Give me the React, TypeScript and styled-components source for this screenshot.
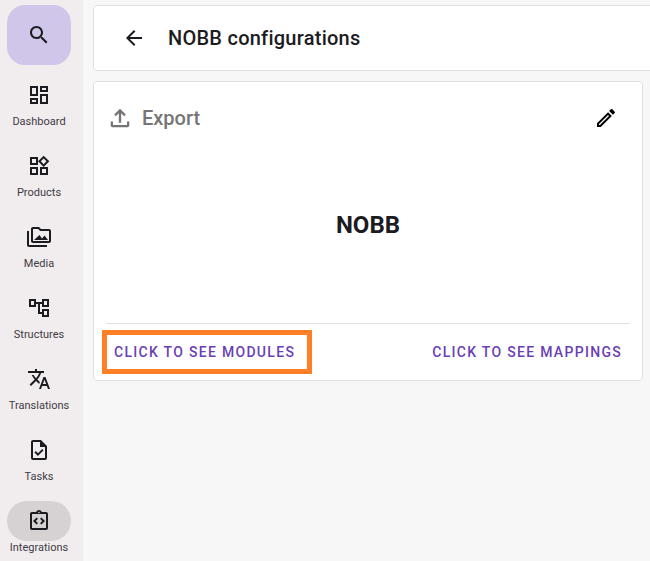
import { ReactNode } from "react";
import styled, { createGlobalStyle } from "styled-components";

const GlobalStyle = createGlobalStyle`
  html, body {
    margin: 0;
    padding: 0;
    height: 100%;
    overflow: hidden;
    background: #f7f7f7;
    font-family: Roboto, "Liberation Sans", sans-serif;
  }
`;

const Page = styled.div`
  display: flex;
  width: 650px;
  height: 561px;
  overflow: hidden;
`;

const Sidebar = styled.nav`
  flex: 0 0 83px;
  min-width: 0;
  box-sizing: border-box;
  padding: 5px 12px 0 7px;
  background: #f1edee;
  display: flex;
  flex-direction: column;
  align-items: center;
`;

const SearchButton = styled.button`
  flex: 0 0 60px;
  width: 64px;
  margin-bottom: 10px;
  border: none;
  border-radius: 18px;
  background: #d0c6e9;
  color: #1c1b1f;
  display: flex;
  align-items: center;
  justify-content: center;
  padding: 0;
`;

const NavItem = styled.a`
  flex: 0 0 71px;
  width: 64px;
  display: flex;
  flex-direction: column;
  align-items: center;
  color: #1c1b1f;
`;

const IconPill = styled.span<{ $active?: boolean }>`
  flex: 0 0 40px;
  width: 64px;
  border-radius: 20px;
  background: ${(p) => (p.$active ? "#d6d2d3" : "transparent")};
  display: flex;
  align-items: center;
  justify-content: center;
`;

const NavLabel = styled.span`
  font-size: 11px;
  line-height: 12px;
  margin-top: 0.5px;
  color: #3f3b45;
  white-space: nowrap;
`;

const Main = styled.main`
  flex: 1;
  min-width: 0;
  padding: 5px 7px 0 10px;
  display: flex;
  flex-direction: column;
  gap: 10px;
`;

const Header = styled.header`
  height: 66px;
  box-sizing: border-box;
  margin-right: -20px;
  background: #fff;
  border: 1px solid #e0e0e0;
  border-radius: 4px;
  display: flex;
  align-items: center;
  padding-left: 28px;
  gap: 22px;
  color: #1c1b1f;
`;

const Title = styled.h1`
  margin: 0;
  font-size: 20px;
  font-weight: 500;
  letter-spacing: 0.25px;
  color: #1c1b1f;
`;

const Card = styled.section`
  height: 300px;
  box-sizing: border-box;
  background: #fff;
  border: 1px solid #e0e0e0;
  border-radius: 4px;
  display: flex;
  flex-direction: column;
`;

const CardTop = styled.div`
  display: flex;
  align-items: center;
  justify-content: space-between;
  padding: 22px 24px 0 12px;
  height: 28px;
`;

const ExportLink = styled.div`
  display: flex;
  align-items: center;
  gap: 8px;
  color: #757575;
  font-size: 20px;
  font-weight: 500;
`;

const CardName = styled.div`
  flex: 1;
  display: flex;
  align-items: center;
  justify-content: center;
  padding-bottom: 5px;
  font-size: 24px;
  font-weight: 700;
  color: #1c1b1f;
`;

const CardActions = styled.div`
  height: 57px;
  box-sizing: border-box;
  margin: 0 12px;
  padding: 0 0 1px 1px;
  border-top: 1px solid #e0e0e0;
  display: flex;
  align-items: center;
  justify-content: space-between;
`;

const ActionButton = styled.button<{ $marked?: boolean }>`
  border: none;
  background: #fff;
  padding: ${(p) => (p.$marked ? "0 12px 0 7px" : "0 8px")};
  height: 34px;
  outline: ${(p) => (p.$marked ? "5px solid #ff7f27" : "none")};
  font-family: inherit;
  font-size: 14px;
  font-weight: 500;
  letter-spacing: 1.3px;
  text-transform: uppercase;
  color: #6a3fb5;
`;

const Icon = ({ d, size = 24 }: { d: string; size?: number }) => (
  <svg width={size} height={size} viewBox="0 0 24 24" fill="currentColor">
    <path d={d} />
  </svg>
);

const icons = {
  search:
    "M15.5 14h-.79l-.28-.27C15.41 12.59 16 11.11 16 9.5 16 5.91 13.09 3 9.5 3S3 5.91 3 9.5 5.91 16 9.5 16c1.61 0 3.09-.59 4.23-1.57l.27.28v.79l5 4.99L20.49 19l-4.99-5zm-6 0C7.01 14 5 11.99 5 9.5S7.01 5 9.5 5 14 7.01 14 9.5 11.99 14 9.5 14z",
  dashboard:
    "M19 5v2h-4V5h4M9 5v6H5V5h4m10 8v6h-4v-6h4M9 17v2H5v-2h4M21 3h-8v6h8V3zM11 3H3v10h8V3zm10 8h-8v10h8V11zm-10 4H3v6h8v-6z",
  products:
    "M16.66 4.52l2.83 2.83-2.83 2.83-2.83-2.83 2.83-2.83M9 5v4H5V5h4m10 10v4h-4v-4h4M9 15v4H5v-4h4m7.66-13.31L11 7.34 16.66 13l5.66-5.66-5.66-5.65zM11 3H3v8h8V3zm10 10h-8v8h8v-8zm-10 0H3v8h8v-8z",
  media:
    "M2 6H0v5h.01L0 20c0 1.1.9 2 2 2h18v-2H2V6zm5 9h14l-3.5-4.5-2.5 3.01L12.5 10 7 15zM22 4h-8l-2-2H6c-1.1 0-1.99.9-1.99 2L4 16c0 1.1.9 2 2 2h16c1.1 0 2-.9 2-2V6c0-1.1-.9-2-2-2zm0 12H6V4h5.17l1.41 1.41.59.59H22v10z",
  structures:
    "M22 11V3h-7v3H9V3H2v8h7V8h2v10h4v3h7v-8h-7v3h-2V8h2v3h7zM7 9H4V5h3v4zm10 6h3v4h-3v-4zm0-10h3v4h-3V5z",
  translations:
    "M12.87 15.07l-2.54-2.51.03-.03c1.74-1.94 2.98-4.17 3.71-6.53H17V4h-7V2H8v2H1v1.99h11.17C11.5 7.92 10.44 9.75 9 11.35 8.07 10.32 7.3 9.19 6.69 8h-2c.73 1.63 1.73 3.17 2.98 4.56l-5.09 5.02L4 19l5-5 3.11 3.11.76-2.04zM18.5 10h-2L12 22h2l1.12-3h4.75L21 22h2l-4.5-12zm-2.62 7l1.62-4.33L19.12 17h-3.24z",
  tasks:
    "M14 2H6c-1.1 0-1.99.9-1.99 2L4 20c0 1.1.89 2 1.99 2H18c1.1 0 2-.9 2-2V8l-6-6zm4 18H6V4h7v5h5v11zm-9.18-6.95L7.4 14.46 10.94 18l5.66-5.66-1.41-1.41-4.24 4.24-2.13-2.12z",
  integrations:
    "M11 14.17L8.83 12 11 9.83 9.59 8.41 6 12l3.59 3.59zM14.41 15.59L18 12l-3.59-3.59L13 9.83 15.17 12 13 14.17zM19 3h-4.18C14.4 1.84 13.3 1 12 1s-2.4.84-2.82 2H5c-.14 0-.27.01-.4.04-.39.08-.74.28-1.01.55-.18.18-.33.4-.43.64-.1.23-.16.49-.16.77v14c0 .27.06.54.16.78s.25.45.43.64c.27.27.62.47 1.01.55.13.02.26.03.4.03h14c1.1 0 2-.9 2-2V5c0-1.1-.9-2-2-2zm-7-.25c.41 0 .75.34.75.75s-.34.75-.75.75-.75-.34-.75-.75.34-.75.75-.75zM19 19H5V5h14v14z",
  back: "M20 11H7.83l5.59-5.59L12 4l-8 8 8 8 1.41-1.41L7.83 13H20v-2z",
  upload:
    "M18 15v3H6v-3H4v3c0 1.1.9 2 2 2h12c1.1 0 2-.9 2-2v-3h-2zM7 9l1.41 1.41L11 7.83V16h2V7.83l2.59 2.58L17 9l-5-5-5 5z",
  edit: "M14.06 9.02l.92.92L5.92 19H5v-.92l9.06-9.06M17.66 3c-.25 0-.51.1-.7.29l-1.83 1.83 3.75 3.75 1.83-1.83c.39-.39.39-1.02 0-1.41l-2.34-2.34c-.2-.2-.45-.29-.71-.29zm-3.6 3.19L3 17.25V21h3.75L17.81 9.94l-3.75-3.75z",
};

const navItems: { label: string; icon: string; active?: boolean }[] = [
  { label: "Dashboard", icon: icons.dashboard },
  { label: "Products", icon: icons.products },
  { label: "Media", icon: icons.media },
  { label: "Structures", icon: icons.structures },
  { label: "Translations", icon: icons.translations },
  { label: "Tasks", icon: icons.tasks },
  { label: "Integrations", icon: icons.integrations, active: true },
];

const Item = ({ label, active, children }: { label: string; active?: boolean; children: ReactNode }) => (
  <NavItem>
    <IconPill $active={active}>{children}</IconPill>
    <NavLabel>{label}</NavLabel>
  </NavItem>
);

const App = () => {
  return (
    <Page>
      <GlobalStyle />
      <Sidebar>
        <SearchButton>
          <Icon d={icons.search} />
        </SearchButton>
        {navItems.map((item) => (
          <Item key={item.label} label={item.label} active={item.active}>
            <Icon d={item.icon} />
          </Item>
        ))}
      </Sidebar>
      <Main>
        <Header>
          <Icon d={icons.back} />
          <Title>NOBB configurations</Title>
        </Header>
        <Card>
          <CardTop>
            <ExportLink>
              <Icon d={icons.upload} size={28} />
              Export
            </ExportLink>
            <Icon d={icons.edit} />
          </CardTop>
          <CardName>NOBB</CardName>
          <CardActions>
            <ActionButton $marked>Click to see modules</ActionButton>
            <ActionButton>Click to see mappings</ActionButton>
          </CardActions>
        </Card>
      </Main>
    </Page>
  );
};

export default App;
